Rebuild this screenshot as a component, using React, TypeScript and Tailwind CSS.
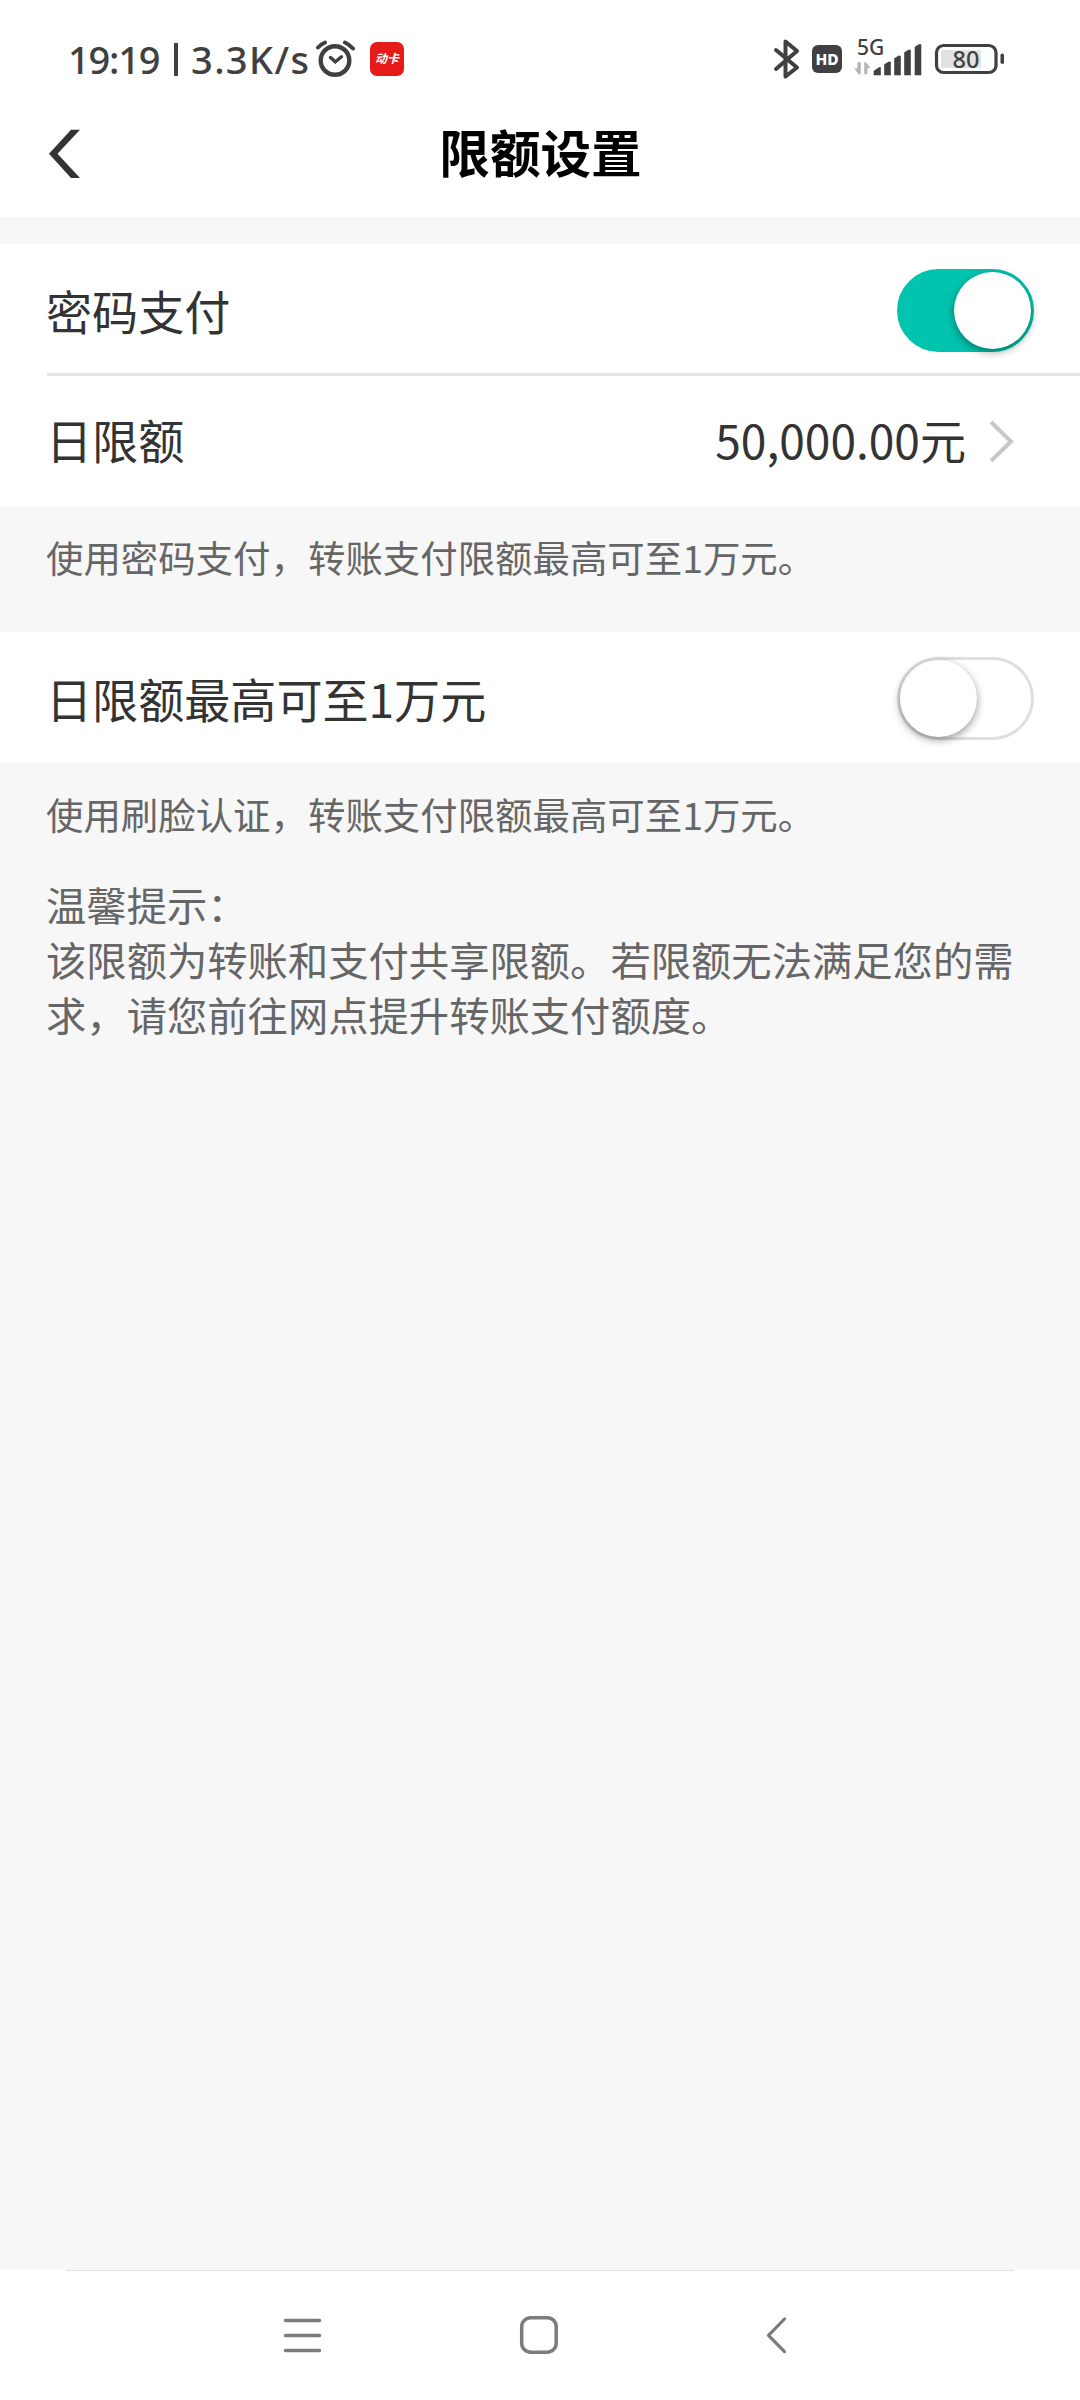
import React, { useState } from 'react'

const HINT = 'pl-[46px] text-[37.44px] leading-[56px] text-[#666]'

interface ToggleProps {
    checked: boolean
    onChange: (value: boolean) => void
}

function Toggle({ checked, onChange }: ToggleProps) {
    return (
        <button
            type="button"
            role="switch"
            aria-checked={checked}
            onClick={() => onChange(!checked)}
            className={`flex items-center w-[137.5px] h-[83px] rounded-full border-[3px] ${checked ? 'justify-end bg-[#00c4ae] border-[#00c4ae]' : 'justify-start bg-white border-[#dfdfdf]'}`}
        >
            <span className="block w-[77px] h-[77px] rounded-full bg-white shadow-[0_3px_9px_rgba(0,0,0,0.4)]" />
        </button>
    )
}

function StatusBar() {
    return (
        <div className="flex items-center h-[118px] pl-[68px] text-[#404040] font-['Noto_Sans'] font-medium">
            <div className="flex items-center w-[247px] text-[38px] leading-none whitespace-nowrap">
                <span className="w-[106px] tracking-[-1.2px]">19:19</span>
                <span className="w-[4px] h-[33px] bg-[#404040] mr-[13px]" />
                <span className="tracking-[1.4px]">3.3K/s</span>
            </div>
            <svg className="w-[40px] h-[40px]" viewBox="315 40 40 40" fill="none" stroke="#404040" strokeWidth="4.400" strokeLinecap="round">
                <circle cx="335" cy="61.500" r="14.300" />
                <path d="M330.500 58.500l4.800 4.300 6.200-5" strokeWidth="3.400" />
                <path d="M318 48.500q3-3.300 7-5M345 43.500q4 1.700 8 6" strokeWidth="4" />
            </svg>
            <div className="flex items-center justify-center w-[34px] h-[34px] ml-[15px] rounded-[7px] bg-[#e71a1a]">
                <span className="font-['Noto_Sans_CJK_SC',sans-serif] text-[12px] leading-none font-bold italic text-white whitespace-nowrap -mt-[2px]">动卡</span>
            </div>
            <svg className="w-[264px] h-[84px] ml-[351px]" viewBox="755 17 264 84" fill="none" stroke="#404040">
                {/* bluetooth */}
                <path d="M776 50l21 17.500-11.500 9V41.500l11.500 9.500-21 18" strokeWidth="4" strokeLinejoin="round" strokeLinecap="round" />
                {/* HD voice */}
                <rect x="812" y="45" width="30" height="28" rx="6" fill="#404040" stroke="none" />
                <text x="827" y="64.700" textAnchor="middle" fontFamily="Noto Sans" fontWeight="800" fontSize="15.500" fill="#fff" stroke="none">HD</text>
                {/* signal */}
                <text x="857" y="55" fontFamily="Noto Sans" fontWeight="500" fontSize="21" fill="#404040" stroke="none">5G</text>
                <path d="M860.500 62.500V74h-1.800l-4-5.500h3v-6zM864.500 74V62.500h1.500l4 5.500h-2.800v6z" fill="#b5b5b5" stroke="#b5b5b5" strokeWidth=".5" />
                <path
                    d="M874 75v-4l5-3.500h1.500V75zM884.500 75V64.500l4-2.500h2v13zM894.500 75V58.500l4-2.500h2v19zM904.500 75V52.500l4-2.500h2v25zM915 75V47l4-2.500h2V75z"
                    fill="#404040"
                    stroke="#404040"
                    strokeWidth=".6"
                    strokeLinejoin="round"
                />
                {/* battery */}
                <rect x="941" y="50" width="40" height="18" rx="2" fill="#e2e2e2" stroke="none" />
                <rect x="936.500" y="45.500" width="59.500" height="27" rx="7" strokeWidth="3.200" />
                <rect x="1000.500" y="53.500" width="3.500" height="10.500" rx="1.700" fill="#404040" stroke="none" />
                <text x="966" y="67.700" textAnchor="middle" fontFamily="Noto Sans" fontWeight="500" fontSize="23.500" fill="#404040" stroke="none">80</text>
            </svg>
        </div>
    )
}

function NavBar() {
    return (
        <div className="h-[130px] bg-white px-[66px]">
            <div className="h-[1px] bg-[#e0e0e0]" />
            <div className="flex items-center h-[127px] pl-[217px]">
                <svg className="w-[39px] h-[40px]" viewBox="0 0 39 40" stroke="#7c7c7c" strokeWidth="3.500" strokeLinecap="round">
                    <path d="M2.500 5.500h34M2.500 20.500h34M2.500 35.500h34" />
                </svg>
                <svg className="w-[40px] h-[40px] ml-[197px]" viewBox="0 0 40 40" fill="none" stroke="#7c7c7c" strokeWidth="3.500">
                    <rect x="2.700" y="2.700" width="34.500" height="34.500" rx="9" />
                </svg>
                <svg className="w-[24px] h-[40px] ml-[205px]" viewBox="0 0 24 40" fill="none" stroke="#7c7c7c" strokeWidth="3.200" strokeLinecap="round" strokeLinejoin="round">
                    <path d="M20.500 4L4.500 20.300l16 16.300" />
                </svg>
            </div>
        </div>
    )
}

export default function App() {
    const [passwordPay, setPasswordPay] = useState(true)
    const [facePay, setFacePay] = useState(false)

    return (
        <div className="flex flex-col w-[1080px] h-[2400px] bg-[#f7f7f7] overflow-hidden font-['Noto_Sans_CJK_SC',sans-serif] text-[#333]">
            <div className="h-[217px] bg-white">
                <StatusBar />
                <div className="flex items-center h-[71px] pl-[46px] pr-[79px]">
                    <svg className="w-[34px] h-[52px]" viewBox="46 127.500 34 52" fill="#333">
                        <path d="M71 129.300h9L57.500 153.300 80 177.500h-9L49 153.300z" />
                    </svg>
                    <h1 className="flex-1 pb-[5px] text-center text-[50.6px] leading-none font-bold text-black">限额设置</h1>
                </div>
            </div>

            <div className="mt-[27px] bg-white pl-[47px]">
                <div className="flex items-center justify-between h-[132px] pt-[4px] pr-[46px] border-b-[3px] border-[#e5e5e5]">
                    <span className="-ml-[1px] text-[46.08px] leading-none">密码支付</span>
                    <Toggle checked={passwordPay} onChange={setPasswordPay} />
                </div>
                <div className="flex items-center h-[130px] pr-[65px]">
                    <span className="flex-1 pb-[3px] -ml-[1px] text-[46.08px] leading-none">日限额</span>
                    <span className="pb-[3px] text-[46.08px] leading-none">50,000.00元</span>
                    <svg className="w-[28px] h-[44px] ml-[21px]" viewBox="0 0 28 44" fill="none" stroke="#c8c8c8" strokeWidth="4">
                        <path d="M4 3l20 19.500L4 42" />
                    </svg>
                </div>
            </div>

            <p className={`${HINT} h-[126px] pt-[23px]`}>使用密码支付，转账支付限额最高可至1万元。</p>

            <div className="flex items-center justify-between h-[130px] bg-white pt-[2px] pl-[46px] pr-[46px]">
                <span className="text-[46.08px] leading-none">日限额最高可至1万元</span>
                <Toggle checked={facePay} onChange={setFacePay} />
            </div>

            <p className={`${HINT} pt-[24px]`}>使用刷脸认证，转账支付限额最高可至1万元。</p>

            <div className="mt-[34px] pl-[46px] w-[1034px] text-[40.32px] leading-[55px] text-[#666]">
                <p>温馨提示：</p>
                <p className="w-[972px]">该限额为转账和支付共享限额。若限额无法满足您的需求，请您前往网点提升转账支付额度。</p>
            </div>

            <div className="flex-1" />
            <NavBar />
        </div>
    )
}
